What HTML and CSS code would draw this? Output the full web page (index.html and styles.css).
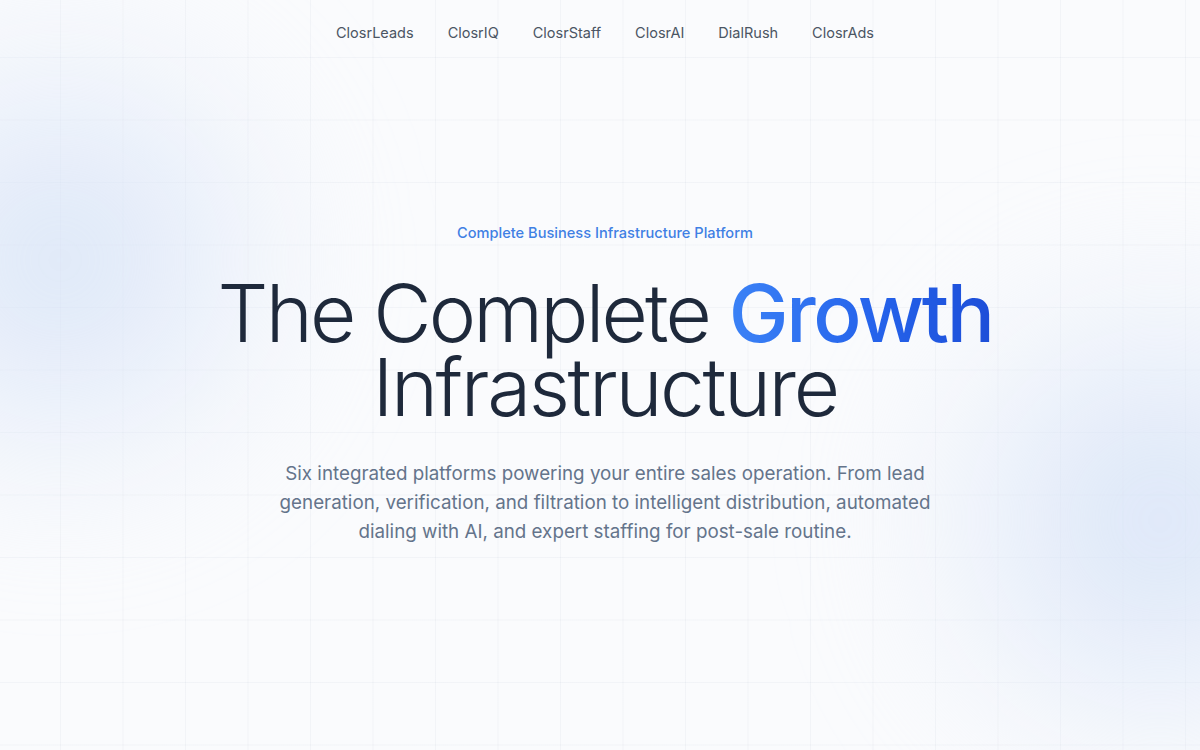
FILE: index.html
```html
<!DOCTYPE html>
<html lang="en">
<head>
<meta charset="utf-8">
<title>Closr — The Complete Growth Infrastructure</title>
<link rel="stylesheet" href="styles.css">
</head>
<body>
<div class="page">
  <div class="bg-grid"></div>
  <div class="blob blob-left"></div>
  <div class="blob blob-right"></div>
  <header class="nav">
    <a class="nav-link" href="#">ClosrLeads</a>
    <a class="nav-link" href="#">ClosrIQ</a>
    <a class="nav-link" href="#">ClosrStaff</a>
    <a class="nav-link" href="#">ClosrAI</a>
    <a class="nav-link" href="#">DialRush</a>
    <a class="nav-link" href="#">ClosrAds</a>
  </header>
  <main class="hero">
    <p class="eyebrow">Complete Business Infrastructure Platform</p>
    <h1 class="title"><span class="line-one">The Complete <span class="accent">Growth</span></span><br>Infrastructure</h1>
    <p class="lead">Six integrated platforms powering your entire sales operation. From lead generation, verification, and filtration to intelligent distribution, automated dialing with AI, and expert staffing for post-sale routine.</p>
  </main>
</div>
</body>
</html>
```

FILE: styles.css
```css
* { box-sizing: border-box; }
html, body { margin: 0; padding: 0; }
body {
  font-family: "Inter", "Noto Sans", "Liberation Sans", sans-serif;
  background: #fafbfd;
  color: #1e293b;
}
.page {
  position: relative;
  width: 100%;
  height: 750px;
  overflow: hidden;
  padding-left: 10px;
}
.bg-grid {
  position: absolute;
  inset: 0;
  background-image:
    linear-gradient(to right, rgba(148, 163, 184, 0.08) 1px, transparent 1px),
    linear-gradient(to bottom, rgba(148, 163, 184, 0.08) 1px, transparent 1px);
  background-size: 62.5px 62.5px;
  background-position: 60px 57px;
  pointer-events: none;
}
.blob {
  position: absolute;
  border-radius: 50%;
  pointer-events: none;
  filter: blur(60px);
}
.blob-left {
  width: 540px;
  height: 540px;
  left: -210px;
  top: -10px;
  background: radial-gradient(circle, rgba(208, 222, 246, 0.8) 0%, rgba(225, 234, 249, 0.45) 45%, rgba(250, 251, 253, 0) 72%);
}
.blob-right {
  width: 560px;
  height: 560px;
  right: -240px;
  top: 240px;
  background: radial-gradient(circle, rgba(208, 222, 246, 0.85) 0%, rgba(225, 234, 249, 0.45) 45%, rgba(250, 251, 253, 0) 72%);
}
.nav {
  position: relative;
  display: flex;
  justify-content: center;
  gap: 34px;
  padding-top: 23px;
  height: 58px;
}
.nav-link {
  font-size: 14.5px;
  line-height: 20px;
  color: #4b5563;
  text-decoration: none;
}
.hero {
  position: relative;
  display: flex;
  flex-direction: column;
  align-items: center;
  text-align: center;
  padding-top: 165px;
}
.eyebrow {
  margin: 0;
  font-size: 14.6px;
  line-height: 20px;
  font-weight: 500;
  color: #3f80e4;
}
.title {
  margin: 33px 0 0;
  font-size: 80px;
  line-height: 74px;
  font-weight: 300;
  letter-spacing: -2.4px;
  color: #1e293b;
}
.line-one {
  letter-spacing: -2.8px;
}
.accent {
  font-weight: 500;
  letter-spacing: -2.4px;
  background: linear-gradient(90deg, #3b82f6 0%, #2563eb 55%, #1d4ed8 100%);
  -webkit-background-clip: text;
  background-clip: text;
  color: transparent;
}
.lead {
  margin: 35px 0 0;
  max-width: 672px;
  font-size: 18.8px;
  line-height: 29px;
  font-weight: 400;
  color: #64748b;
}
```
